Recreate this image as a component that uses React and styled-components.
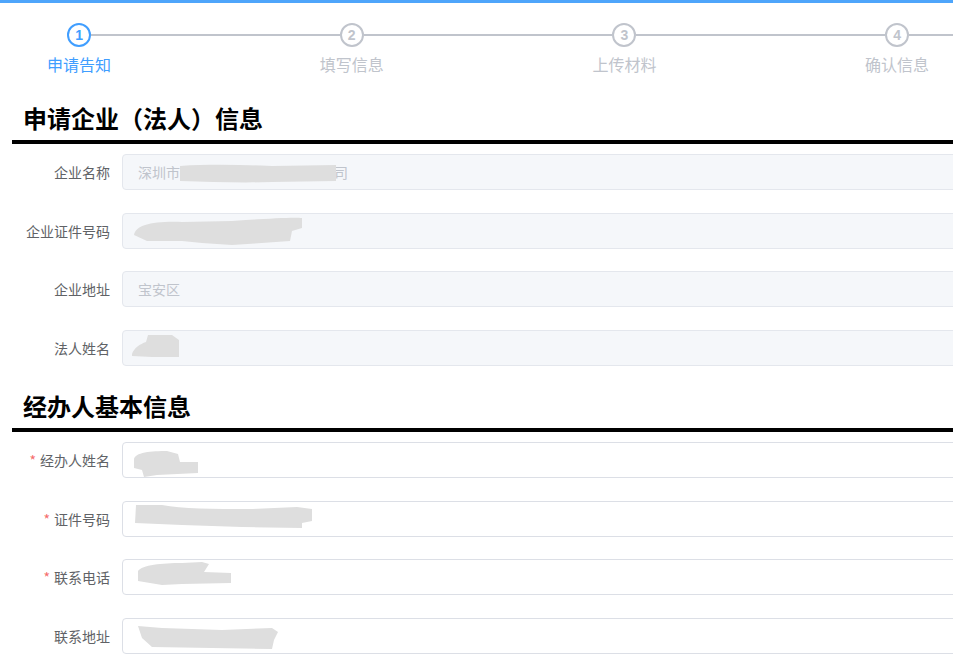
import React from "react";
import styled, { createGlobalStyle } from "styled-components";

const Global = createGlobalStyle`
  html, body { margin: 0; padding: 0; overflow: hidden; background: #fff; }
  body { font-family: "Noto Sans CJK SC", "Noto Sans", sans-serif; }
  * { box-sizing: border-box; }
`;

const Page = styled.div`
  width: 1400px;
  border-top: 3px solid #4ea5fb;
`;

const StepsWrap = styled.div`
  overflow: hidden;
  width: 953px;
  padding-top: 20px;
`;

const Steps = styled.div`
  display: flex;
  margin-left: -57.3px;
`;

const Step = styled.div`
  flex: 0 0 272.7px;
  display: flex;
  flex-direction: column;
  align-items: center;
`;

const StepHead = styled.div`
  width: 100%;
  display: flex;
  align-items: center;
  height: 24px;
`;

const StepLine = styled.div`
  flex: 1;
  height: 2px;
  background: ${(p) => (p.$hidden ? "transparent" : "#c0c4cc")};
`;

const Circle = styled.div`
  width: 24px;
  height: 24px;
  border-radius: 50%;
  border: 2px solid ${(p) => (p.$active ? "#409eff" : "#c0c4cc")};
  color: ${(p) => (p.$active ? "#409eff" : "#c0c4cc")};
  display: flex;
  align-items: center;
  justify-content: center;
  font-family: "Liberation Sans", Arial, sans-serif;
  font-weight: 700;
  font-size: 14px;
  line-height: 1;
`;

const StepTitle = styled.div`
  margin-top: 6px;
  font-size: 16px;
  line-height: 22px;
  color: ${(p) => (p.$active ? "#409eff" : "#c0c4cc")};
`;

const Section = styled.section`
  padding-left: 12px;
`;

const SectionTitle = styled.h2`
  margin: 0;
  padding-left: 11px;
  height: 36px;
  line-height: 36px;
  font-size: 24px;
  font-weight: 700;
  color: #000;
  border-bottom: 4px solid #000;
  box-sizing: content-box;
  padding-bottom: 4px;
  margin-bottom: 10px;
`;

const FirstTitle = styled(SectionTitle)`
  margin-top: 25px;
`;

const Row = styled.div`
  display: flex;
  align-items: center;
  height: 36px;
  margin-bottom: 22.5px;
`;

const Label = styled.label`
  flex: 0 0 110px;
  padding-right: 12px;
  text-align: right;
  font-size: 14px;
  color: #606266;
  line-height: 36px;
`;

const Star = styled.span`
  color: #f56c6c;
  margin-right: 4px;
`;

const Field = styled.div`
  position: relative;
  flex: 1;
  height: 36px;
  border-radius: 4px;
  border: 1px solid ${(p) => (p.$disabled ? "#e4e7ed" : "#dcdfe6")};
  background: ${(p) => (p.$disabled ? "#f5f7fa" : "#fff")};
  padding: 0 15px;
  font-size: 14px;
  line-height: 34px;
  color: #c0c4cc;
  white-space: nowrap;
  overflow: hidden;
`;

const SmudgeSvg = styled.svg`
  position: absolute;
  left: -1px;
  top: -1px;
  filter: blur(0.7px);
`;

function Smudge({ d }) {
  return (
    <SmudgeSvg width="320" height="36" viewBox="0 0 320 36">
      <path d={d} fill="#dedede" />
    </SmudgeSvg>
  );
}

const steps = ["申请告知", "填写信息", "上传材料", "确认信息"];

const companyFields = [
  { label: "企业名称", text: "深圳市某某某某科技股份有限公司", d: "M58 12 C90 10, 120 11, 150 12 L214 11 L214 27 L150 28 C120 29, 90 28, 58 27 Z" },
  { label: "企业证件号码", d: "M12 22 C14 12, 30 8, 60 9 L110 8 C140 6, 170 4, 180 5 L180 15 L170 18 L168 28 L110 32 L80 30 L60 28 L25 28 Z" },
  { label: "企业地址", text: "宝安区" },
  { label: "法人姓名", d: "M10 24 C12 18, 18 14, 24 12 L26 5 L50 5 L57 10 L57 27 L30 27 L10 26 Z" },
];

const agentFields = [
  { label: "经办人姓名", req: true, d: "M12 18 C12 10, 30 9, 45 9 L56 12 L58 20 L76 20 L76 31 L35 33 L22 35 L20 28 L12 26 Z" },
  { label: "证件号码", req: true, d: "M14 4 L40 4 C60 8, 90 8, 130 8 L175 6 L190 8 L190 20 L180 22 L180 27 L120 26 L60 24 L13 22 Z" },
  { label: "联系电话", req: true, d: "M16 12 C20 6, 40 4, 60 4 L80 3 L87 5 L82 13 L109 14 L109 24 L60 25 L40 26 L16 22 Z" },
  { label: "联系地址", d: "M16 8 L40 10 L100 12 L150 10 L156 14 L152 22 L150 31 L90 30 L30 29 L20 20 Z" },
];

export default function App() {
  return (
    <>
      <Global />
      <Page>
        <StepsWrap>
          <Steps>
            {steps.map((s, i) => (
              <Step key={s}>
                <StepHead>
                  <StepLine $hidden={i === 0} />
                  <Circle $active={i === 0}>{i + 1}</Circle>
                  <StepLine />
                </StepHead>
                <StepTitle $active={i === 0}>{s}</StepTitle>
              </Step>
            ))}
          </Steps>
        </StepsWrap>

        <Section>
          <FirstTitle>申请企业（法人）信息</FirstTitle>
          {companyFields.map((f) => (
            <Row key={f.label}>
              <Label>{f.label}</Label>
              <Field $disabled>
                {f.text}
                {f.d && <Smudge d={f.d} />}
              </Field>
            </Row>
          ))}
        </Section>

        <Section>
          <SectionTitle>经办人基本信息</SectionTitle>
          {agentFields.map((f) => (
            <Row key={f.label}>
              <Label>
                {f.req && <Star>*</Star>}
                {f.label}
              </Label>
              <Field>{f.d && <Smudge d={f.d} />}</Field>
            </Row>
          ))}
        </Section>
      </Page>
    </>
  );
}
